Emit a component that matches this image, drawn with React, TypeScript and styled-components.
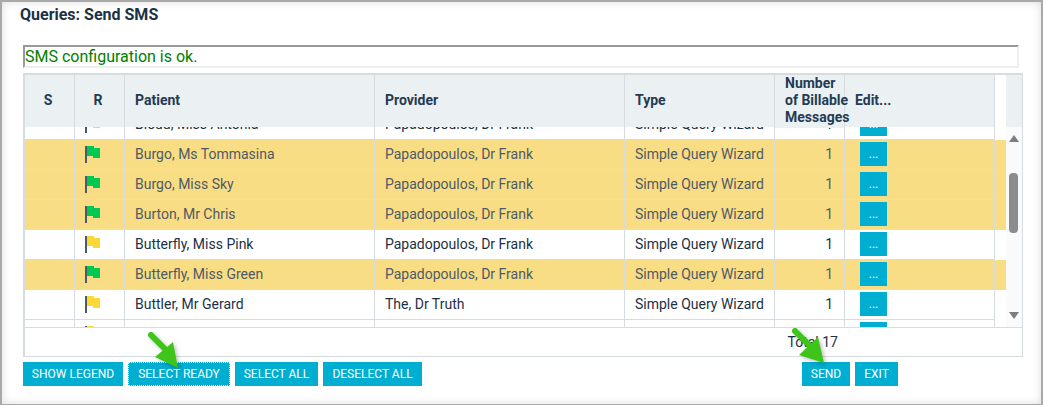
import React from 'react';
import styled, { createGlobalStyle } from 'styled-components';

const COLUMNS = '50px 50px 250px 250px 150px 70px 150px';
const LINE = '#d6dce0';
const BUTTON = '#00aed1';

interface QueryRow {
  patient: string;
  provider: string;
  type: string;
  count: string;
  ready: boolean;
}

const rows: QueryRow[] = [
  {patient: 'Bloud, Miss Antonia', provider: 'Papadopoulos, Dr Frank', type: 'Simple Query Wizard', count: '1', ready: false},
  {patient: 'Burgo, Ms Tommasina', provider: 'Papadopoulos, Dr Frank', type: 'Simple Query Wizard', count: '1', ready: true},
  {patient: 'Burgo, Miss Sky', provider: 'Papadopoulos, Dr Frank', type: 'Simple Query Wizard', count: '1', ready: true},
  {patient: 'Burton, Mr Chris', provider: 'Papadopoulos, Dr Frank', type: 'Simple Query Wizard', count: '1', ready: true},
  {patient: 'Butterfly, Miss Pink', provider: 'Papadopoulos, Dr Frank', type: 'Simple Query Wizard', count: '1', ready: false},
  {patient: 'Butterfly, Miss Green', provider: 'Papadopoulos, Dr Frank', type: 'Simple Query Wizard', count: '1', ready: true},
  {patient: 'Buttler, Mr Gerard', provider: 'The, Dr Truth', type: 'Simple Query Wizard', count: '1', ready: false},
  {patient: '', provider: '', type: '', count: '', ready: false},
];

const Flag: React.FC<{ ready: boolean }> = ({ready}) => {
  const color = ready ? '#00c853' : '#fdd835';
  return (
    <FlagIcon width="16" height="17" viewBox="0 0 16 17">
      <rect x="0" y="0" width="2" height="17" fill="#4a5b6c"/>
      <rect x="2" y="0" width="7" height="10" fill={color}/>
      <rect x="8" y="2" width="7" height="10" fill={color}/>
    </FlagIcon>
  );
};

const Arrow: React.FC<{ left: number; top: number; head: string; tip: [number, number] }> = ({left, top, head, tip}) => {
  return (
    <ArrowBox $left={left} $top={top} width="44" height="46" viewBox="0 0 44 46">
      <line x1="6" y1="5" x2={tip[0]} y2={tip[1]} stroke="#3fc41a" strokeWidth="6" strokeLinecap="round"/>
      <polygon points={head} fill="#3fc41a"/>
    </ArrowBox>
  );
};

export default function App() {
  return (
    <>
      <GlobalStyle/>
      <Frame>
        <Title>Queries: Send SMS</Title>
        <MessageBox>SMS configuration is ok.</MessageBox>
        <Grid>
          <HeaderRow>
            <HeaderCell $center>S</HeaderCell>
            <HeaderCell $center>R</HeaderCell>
            <HeaderCell>Patient</HeaderCell>
            <HeaderCell>Provider</HeaderCell>
            <HeaderCell>Type</HeaderCell>
            <CountHeader>Number<br/>of Billable<br/>Messages</CountHeader>
            <HeaderCell>Edit...</HeaderCell>
            <HeaderGap/>
            <HeaderScroll/>
          </HeaderRow>
          <Body>
            <Viewport>
              <RowList>
                {rows.map((row, index) => (
                  <Row key={index} $ready={row.ready}>
                    <Cell $ready={row.ready}/>
                    <Cell $ready={row.ready}><Flag ready={row.ready}/></Cell>
                    <Cell $ready={row.ready}>{row.patient}</Cell>
                    <Cell $ready={row.ready}>{row.provider}</Cell>
                    <Cell $ready={row.ready}>{row.type}</Cell>
                    <CountCell $ready={row.ready}>{row.count}</CountCell>
                    <EditCell $ready={row.ready}><EditButton>...</EditButton></EditCell>
                  </Row>
                ))}
              </RowList>
            </Viewport>
            <ScrollTrack>
              <ArrowUp/>
              <Thumb/>
              <ArrowDown/>
            </ScrollTrack>
          </Body>
          <Footer>Total 17</Footer>
        </Grid>
        <ActionBar>
          <ButtonGroup>
            <ActionButton $width={100}>Show Legend</ActionButton>
            <ActionButton $width={102} $focused>Select Ready</ActionButton>
            <ActionButton $width={83}>Select All</ActionButton>
            <ActionButton $width={99}>Deselect All</ActionButton>
          </ButtonGroup>
          <ButtonGroup>
            <ActionButton $width={48}>Send</ActionButton>
            <ActionButton $width={43}>Exit</ActionButton>
          </ButtonGroup>
        </ActionBar>
        <Arrow left={143} top={328} tip={[20, 19]} head="28,12 10,27 33,38"/>
        <Arrow left={787} top={324} tip={[20, 19]} head="29,11 10,29 35,37"/>
      </Frame>
    </>
  );
}

const GlobalStyle = createGlobalStyle`
  html, body {
    margin: 0;
    padding: 0;
    background: #fff;
    overflow: hidden;
  }
  body {
    font-family: Roboto, "Liberation Sans", sans-serif;
  }
`;

const Frame = styled.div`
  position: relative;
  box-sizing: border-box;
  width: 1043px;
  height: 405px;
  padding: 3px 0 0 21px;
  border: 2px solid #a9a9a9;
  border-bottom-width: 1px;
  box-shadow: inset 0 0 8px rgba(0, 0, 0, 0.14);
  background: #fff;
`;

const Title = styled.div`
  margin-left: -3px;
  font-size: 16px;
  line-height: 20px;
  font-weight: 700;
  color: #1c3144;
`;

const MessageBox = styled.div`
  box-sizing: border-box;
  width: 996px;
  height: 23px;
  margin-top: 20px;
  border-style: solid;
  border-width: 2px;
  border-color: #999 #eee #eee #999;
  background: #fff;
  color: #008000;
  font-size: 16px;
  line-height: 19px;
`;

const Grid = styled.div`
  box-sizing: border-box;
  width: 1000px;
  height: 284px;
  margin-top: 5px;
  border: 2px solid ${LINE};
  border-right-width: 1px;
  border-bottom-width: 1px;
  background: #fff;
`;

const HeaderRow = styled.div`
  display: grid;
  grid-template-columns: ${COLUMNS} 11px 16px;
  height: 52px;
`;

const HeaderCell = styled.div<{ $center?: boolean }>`
  box-sizing: border-box;
  display: flex;
  align-items: center;
  justify-content: ${p => p.$center ? 'center' : 'flex-start'};
  padding: ${p => p.$center ? '0 3px 2px 0' : '0 0 2px 10px'};
  background: #ebf0f3;
  border-right: 1px solid ${LINE};
  color: #243b53;
  font-size: 14px;
  line-height: 17px;
  font-weight: 700;
  white-space: nowrap;
`;

const CountHeader = styled(HeaderCell)`
  position: relative;
  z-index: 1;
`;

const HeaderGap = styled.div`
  background: #fff;
`;

const HeaderScroll = styled.div`
  background: #ebf0f3;
`;

const Body = styled.div`
  display: flex;
  height: 200px;
`;

const Viewport = styled.div`
  flex: 1;
  overflow: hidden;
`;

const RowList = styled.div`
  margin-top: -17px;
`;

const Row = styled.div<{ $ready: boolean }>`
  display: grid;
  grid-template-columns: ${COLUMNS} 11px;
  height: 30px;
  background: ${p => p.$ready ? '#f9dd84' : '#fff'};
  color: ${p => p.$ready ? '#4e5a66' : '#1c3144'};
`;

const Cell = styled.div<{ $ready: boolean }>`
  box-sizing: border-box;
  display: flex;
  align-items: center;
  padding: 0 0 1px 10px;
  border-right: 1px solid ${LINE};
  border-bottom: 1px solid ${p => p.$ready ? '#e6e0bf' : LINE};
  font-size: 14px;
  white-space: nowrap;
`;

const FlagIcon = styled.svg`
  display: block;
  margin-top: 1px;
`;

const CountCell = styled(Cell)`
  justify-content: flex-end;
  padding: 0 11px 1px 0;
`;

const EditCell = styled(Cell)`
  padding-left: 15px;
`;

const EditButton = styled.button`
  width: 27px;
  height: 24px;
  padding: 0;
  border: 0;
  background: ${BUTTON};
  color: #fff;
  font-family: inherit;
  font-size: 12px;
  line-height: 24px;
`;

const ScrollTrack = styled.div`
  display: flex;
  flex-direction: column;
  align-items: center;
  width: 16px;
  padding-right: 1px;
  box-sizing: border-box;
  background: #fafafa;
`;

const ArrowUp = styled.div`
  width: 0;
  height: 0;
  margin-top: 8px;
  border-left: 5px solid transparent;
  border-right: 5px solid transparent;
  border-bottom: 7px solid #7d7d7d;
`;

const Thumb = styled.div`
  width: 9px;
  height: 60px;
  margin-top: 31px;
  border-radius: 4px;
  background: #8c8c8c;
`;

const ArrowDown = styled.div`
  width: 0;
  height: 0;
  margin-top: auto;
  margin-bottom: 8px;
  border-left: 5px solid transparent;
  border-right: 5px solid transparent;
  border-top: 7px solid #7d7d7d;
`;

const Footer = styled.div`
  box-sizing: border-box;
  display: flex;
  align-items: center;
  justify-content: flex-end;
  height: 29px;
  padding-right: 184px;
  border-top: 1px solid ${LINE};
  color: #1c3144;
  font-size: 14px;
`;

const ActionBar = styled.div`
  display: flex;
  justify-content: space-between;
  width: 875px;
  margin-top: 5px;
`;

const ButtonGroup = styled.div`
  display: flex;
  gap: 5px;
`;

const ActionButton = styled.button<{ $width: number; $focused?: boolean }>`
  box-sizing: border-box;
  width: ${p => p.$width}px;
  height: 24px;
  padding: 0;
  border: 1px ${p => p.$focused ? 'dotted #fff' : `solid ${BUTTON}`};
  background: ${BUTTON};
  color: #fff;
  font-family: inherit;
  font-size: 12px;
  font-weight: 400;
  line-height: 22px;
  text-transform: uppercase;
  white-space: nowrap;
`;

const ArrowBox = styled.svg<{ $left: number; $top: number }>`
  position: absolute;
  left: ${p => p.$left}px;
  top: ${p => p.$top}px;
  filter: drop-shadow(2px 2px 2px rgba(0, 0, 0, 0.25));
`;
